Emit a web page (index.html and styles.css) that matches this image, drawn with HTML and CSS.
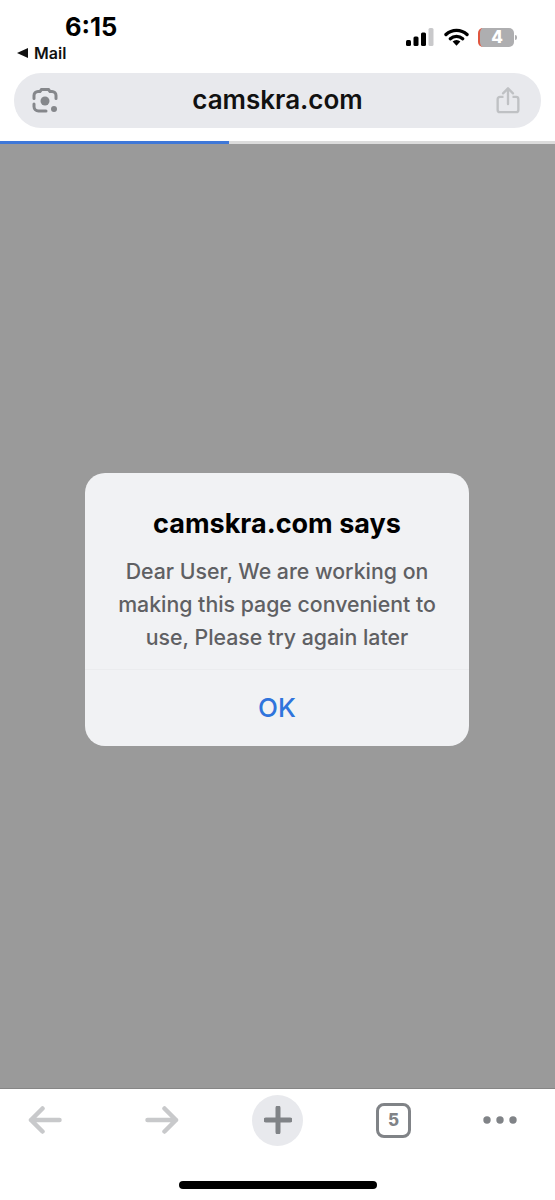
FILE: index.html
```html
<!DOCTYPE html>
<html lang="en">
<head>
<meta charset="UTF-8">
<meta name="viewport" content="width=device-width, initial-scale=1.0">
<title>camskra.com</title>
<link rel="stylesheet" href="styles.css">
</head>
<body>
<header class="top">
  <div class="status">
    <div class="status-left">
      <div class="time">6:15</div>
      <div class="back"><span class="back-arrow"></span>Mail</div>
    </div>
    <div class="status-right">
      <svg class="signal" width="28" height="18" viewBox="0 0 28 18">
        <rect x="0" y="12" width="5" height="6" rx="1.5" fill="#000"/>
        <rect x="7.5" y="8.5" width="5" height="9.5" rx="1.5" fill="#000"/>
        <rect x="15" y="4.5" width="5" height="13.5" rx="1.5" fill="#000"/>
        <rect x="22.5" y="0" width="5" height="18" rx="1.5" fill="#c9c9cb"/>
      </svg>
      <svg class="wifi" width="25" height="18" viewBox="0 0 25 18">
        <path d="M2 6.5 A15.5 15.5 0 0 1 23 6.5" fill="none" stroke="#000" stroke-width="3.4" stroke-linecap="round"/>
        <path d="M6.3 10.7 A9.5 9.5 0 0 1 18.7 10.7" fill="none" stroke="#000" stroke-width="3.4" stroke-linecap="round"/>
        <path d="M12.5 17.8 L8.6 13.6 A5.5 5.5 0 0 1 16.4 13.6 Z" fill="#000"/>
      </svg>
      <div class="battery"><span class="battery-num">4</span></div>
      <span class="battery-cap"></span>
    </div>
  </div>
  <div class="urlbar">
    <svg class="lens" width="28" height="28" viewBox="0 0 28 28">
      <path d="M3 11.5 V8.5 A4 4 0 0 1 7 4.5 H9 L10.5 2.5 H17.5 L19 4.5 H21 A4 4 0 0 1 25 8.5 V11.5" fill="none" stroke="#85878b" stroke-width="3" stroke-linecap="round"/>
      <path d="M3 17 V19.5 A4.5 4.5 0 0 0 7.5 24 H15" fill="none" stroke="#85878b" stroke-width="3" stroke-linecap="round"/>
      <circle cx="14" cy="14" r="4.5" fill="#85878b"/>
      <circle cx="23" cy="22" r="3" fill="#85878b"/>
    </svg>
    <span class="url">camskra.com</span>
    <svg class="share" width="24" height="27" viewBox="0 0 26 30">
      <path d="M8 11 H4 A2.5 2.5 0 0 0 1.5 13.5 V25.5 A2.5 2.5 0 0 0 4 28 H22 A2.5 2.5 0 0 0 24.5 25.5 V13.5 A2.5 2.5 0 0 0 22 11 H18" fill="none" stroke="#bfc1c4" stroke-width="2.6"/>
      <path d="M13 19 V2 M7.5 7 L13 1.5 L18.5 7" fill="none" stroke="#bfc1c4" stroke-width="2.6" stroke-linecap="round" stroke-linejoin="round"/>
    </svg>
  </div>
  <div class="progress"><div class="progress-fill"></div></div>
</header>

<main class="page">
  <div class="dialog">
    <div class="dialog-body">
      <h2>camskra.com says</h2>
      <p>Dear User, We are working on making this page convenient to use, Please try again later</p>
    </div>
    <div class="dialog-ok">OK</div>
  </div>
</main>

<footer class="toolbar">
  <div class="tools">
    <svg class="arrow-back" width="34" height="28" viewBox="0 0 34 28">
      <path d="M31.5 14 H3 M14.5 2.5 L3 14 L14.5 25.5" fill="none" stroke="#c8c9cb" stroke-width="4.5" stroke-linecap="round" stroke-linejoin="round"/>
    </svg>
    <svg width="34" height="28" viewBox="0 0 34 28">
      <path d="M2.5 14 H31 M19.5 2.5 L31 14 L19.5 25.5" fill="none" stroke="#c8c9cb" stroke-width="4.5" stroke-linecap="round" stroke-linejoin="round"/>
    </svg>
    <div class="plus">
      <svg width="28" height="28" viewBox="0 0 28 28">
        <path d="M14 2 V26 M2 14 H26" fill="none" stroke="#808387" stroke-width="5" stroke-linecap="round"/>
      </svg>
    </div>
    <div class="tabs">5</div>
    <svg width="34" height="8" viewBox="0 0 34 8">
      <circle cx="4" cy="4" r="3.7" fill="#808387"/>
      <circle cx="17" cy="4" r="3.7" fill="#808387"/>
      <circle cx="30" cy="4" r="3.7" fill="#808387"/>
    </svg>
  </div>
  <div class="home-bar"></div>
</footer>
</body>
</html>
```
FILE: styles.css
```css
* {
  box-sizing: border-box;
}
body {
  font-family: Inter, "Liberation Sans", sans-serif;
  margin: 0;
  width: 555px;
  height: 1200px;
  overflow: hidden;
  background: #fff;
  display: flex;
  flex-direction: column;
}
.top {
  height: 144px;
  flex: none;
}
.status {
  height: 73px;
  display: flex;
  justify-content: space-between;
}
.status-left {
  padding: 12px 0 0 17px;
}
.time {
  font-size: 25.5px;
  font-weight: 700;
  line-height: 29px;
  margin-left: 48px;
}
.back {
  display: flex;
  align-items: center;
  font-size: 16px;
  font-weight: 600;
  line-height: 18px;
  margin-top: 3px;
  color: #111;
}
.back-arrow {
  width: 0;
  height: 0;
  border-top: 5px solid transparent;
  border-bottom: 5px solid transparent;
  border-right: 11px solid #111;
  margin-right: 6px;
}
.status-right {
  display: flex;
  align-items: center;
  height: 28px;
  margin-top: 23px;
  padding-right: 38px;
}
.signal {
  margin-right: 10px;
}
.wifi {
  margin-right: 9px;
}
.battery {
  width: 36px;
  height: 19px;
  background: #aeaeb0;
  border-left: 2px solid #e0563f;
  border-radius: 5px;
  text-align: center;
}
.battery-num {
  color: #fff;
  font-size: 17px;
  font-weight: 800;
  line-height: 19px;
  display: block;
}
.battery-cap {
  width: 2px;
  height: 5px;
  margin-left: 1px;
  background: #aeaeb0;
  border-radius: 0 2px 2px 0;
}
.urlbar {
  margin: 0 14px;
  height: 55px;
  border-radius: 27px;
  background: #e8e9ed;
  display: flex;
  align-items: center;
  justify-content: space-between;
  padding: 0 21px 0 17px;
}
.url {
  font-size: 26px;
  font-weight: 600;
  color: #111;
  margin-bottom: 3px;
}
.progress {
  margin-top: 13px;
  height: 3px;
  background: #dcdcdc;
}
.progress-fill {
  width: 229px;
  height: 3px;
  background: #3f78d8;
}
.page {
  flex: 1;
  background: #9a9a9a;
  display: flex;
  align-items: center;
  justify-content: center;
  padding: 0 1px 13px 0;
}
.dialog {
  width: 384px;
  height: 273px;
  background: #f1f2f4;
  border-radius: 20px;
  display: flex;
  flex-direction: column;
}
.dialog-body {
  height: 197px;
  padding: 34px 15px 0;
  text-align: center;
  border-bottom: 1px solid #ebecee;
}
.dialog-body h2 {
  margin: 0;
  font-size: 27px;
  font-weight: 700;
  line-height: 34px;
  color: #000;
}
.dialog-body p {
  margin: 14px 0 0;
  font-size: 21.3px;
  font-weight: 500;
  line-height: 33px;
  color: #5f6063;
}
.dialog-ok {
  flex: 1;
  display: flex;
  align-items: center;
  justify-content: center;
  font-size: 26px;
  font-weight: 500;
  color: #2f74dc;
  padding-bottom: 2px;
}
.toolbar {
  height: 112px;
  flex: none;
  background: #fff;
  border-top: 1px solid #868686;
}
.tools {
  height: 62px;
  display: flex;
  align-items: center;
  gap: 73px;
  padding-left: 28px;
}
.arrow-back {
  margin-right: 10px;
}
.plus {
  width: 51px;
  height: 51px;
  border-radius: 50%;
  background: #e8e9ed;
  display: flex;
  align-items: center;
  justify-content: center;
}
.tabs {
  width: 35px;
  height: 35px;
  margin-right: -1px;
  border: 3.5px solid #808387;
  border-radius: 8px;
  color: #808387;
  font-size: 17px;
  font-weight: 800;
  display: flex;
  align-items: center;
  justify-content: center;
}
.home-bar {
  width: 198px;
  height: 8px;
  margin: 30px auto 0;
  border-radius: 4px;
  background: #000;
}
```
